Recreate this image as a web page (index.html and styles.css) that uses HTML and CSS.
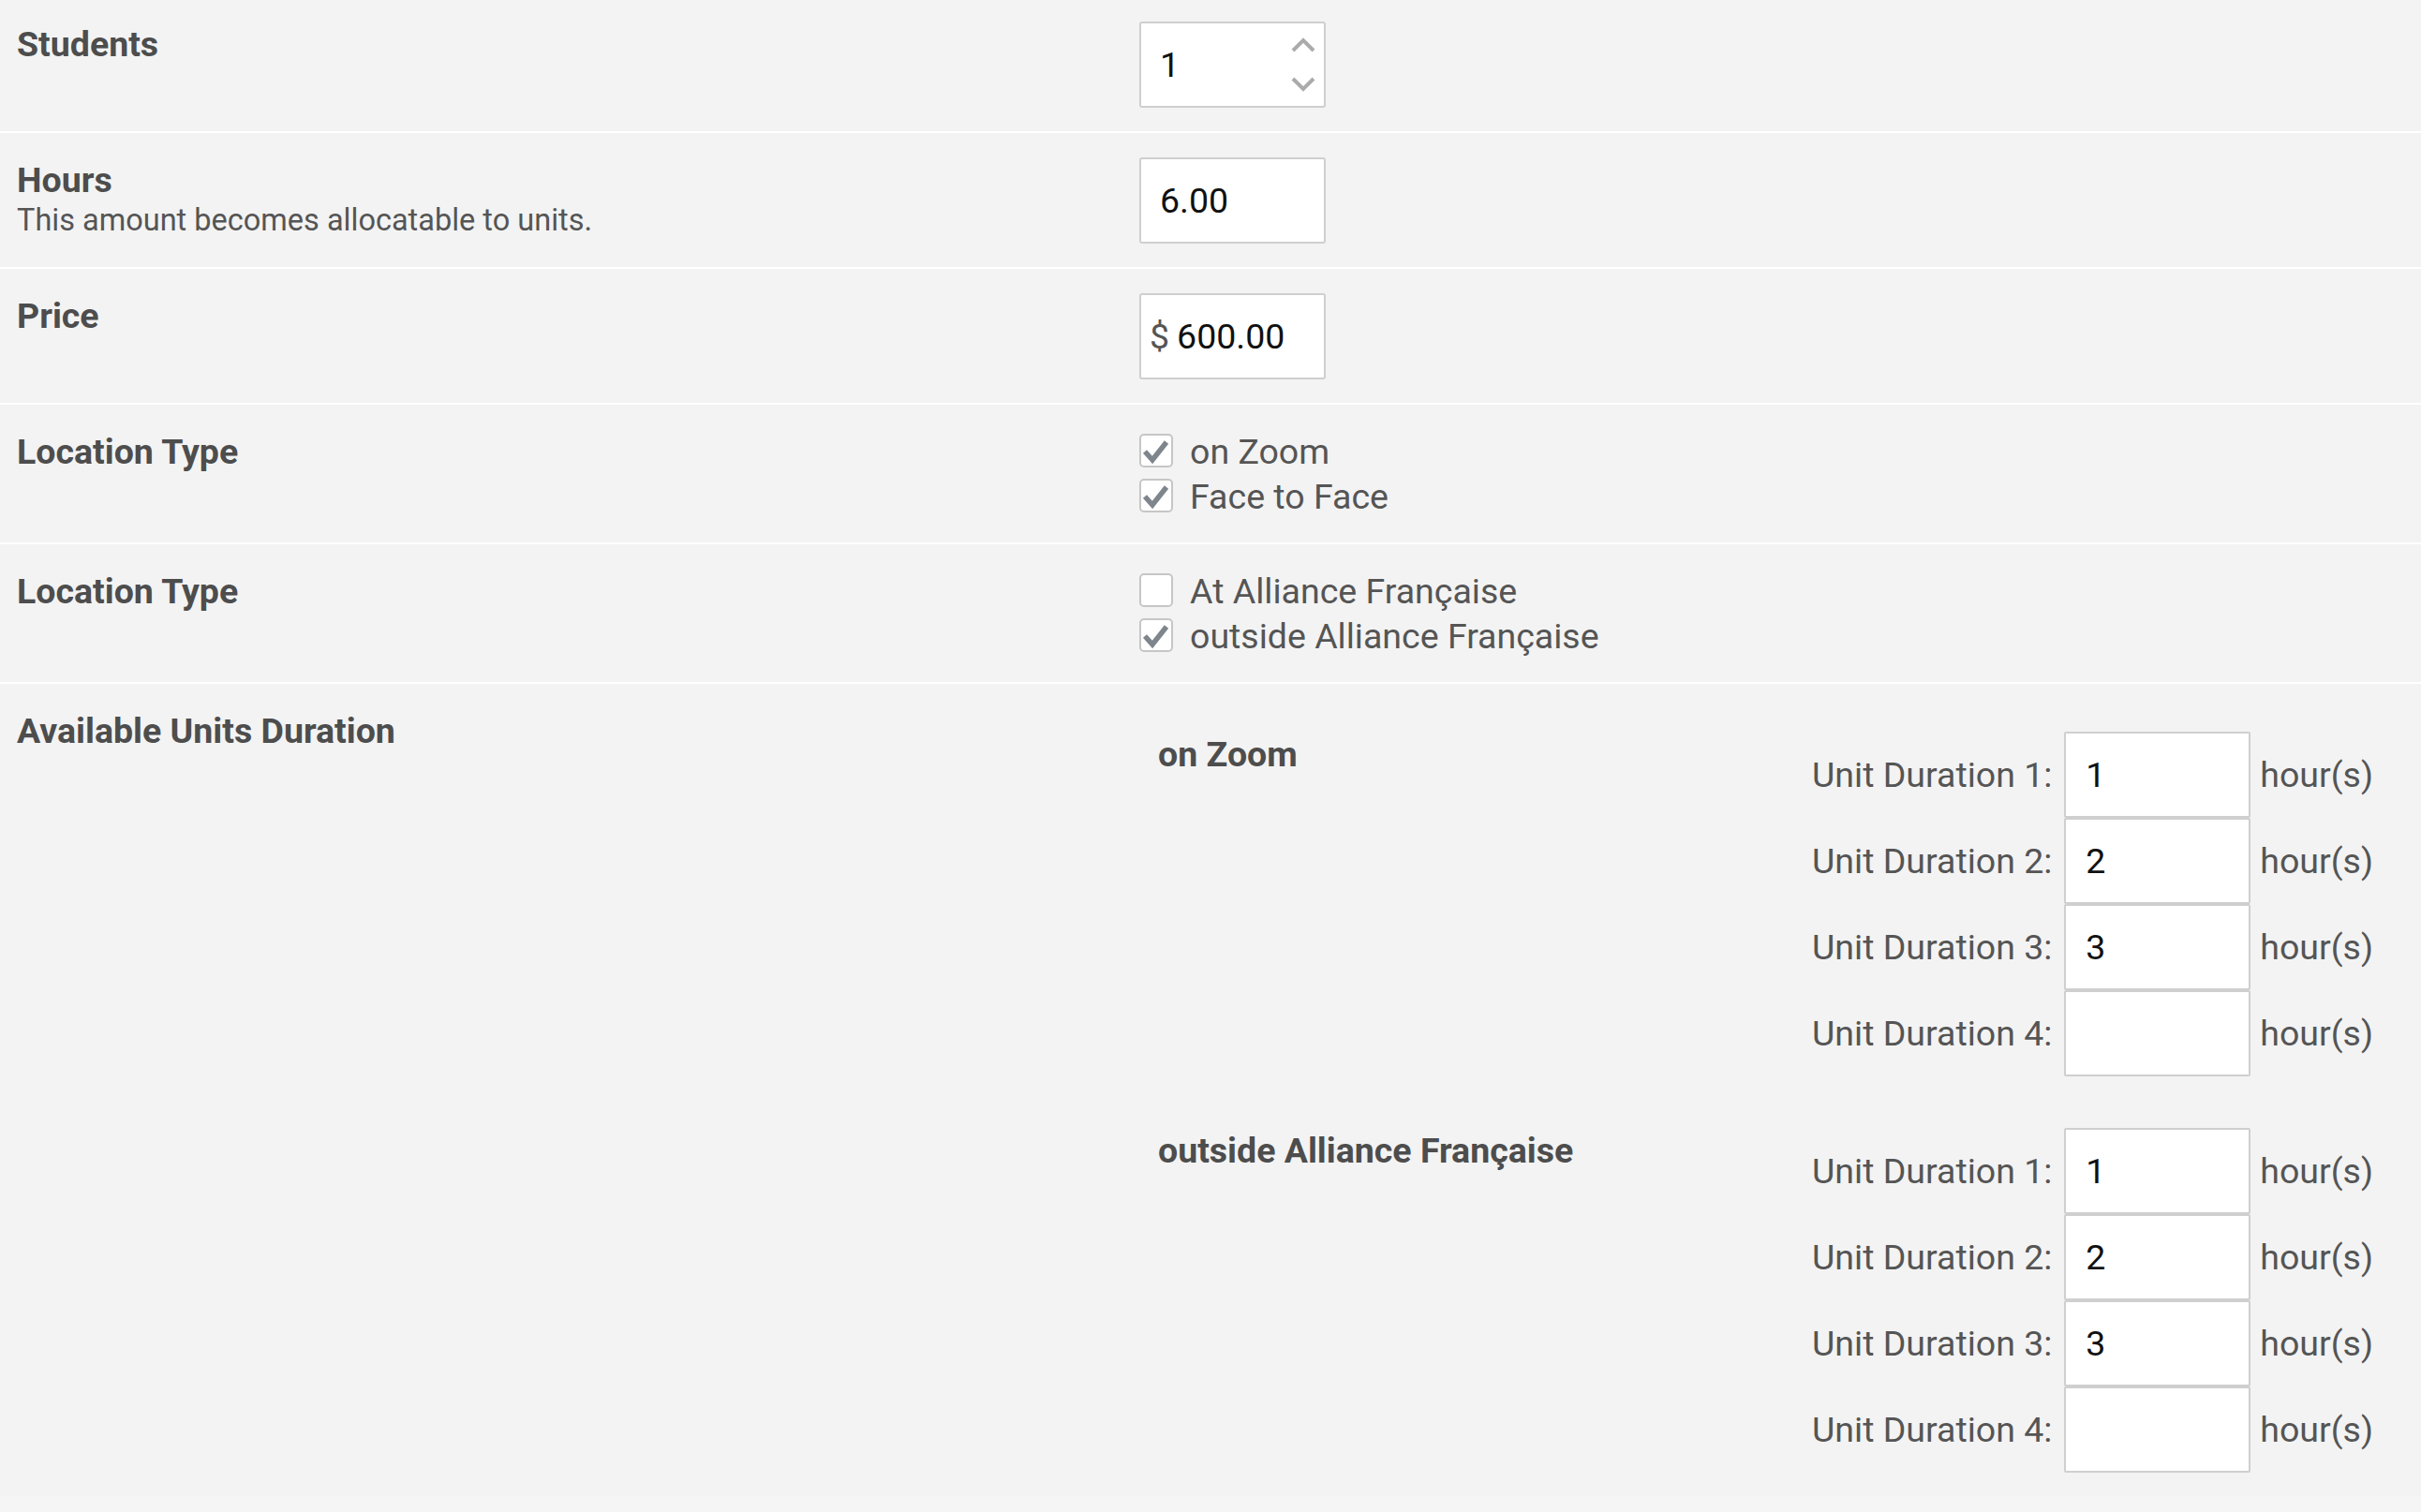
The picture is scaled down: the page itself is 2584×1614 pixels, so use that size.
FILE: index.html
```html
<!DOCTYPE html>
<html lang="en">
<head>
<meta charset="utf-8">
<title>Package settings</title>
<link rel="stylesheet" href="styles.css">
</head>
<body>
<div class="form">
  <div class="row">
    <div class="label-col"><div class="label">Students</div></div>
    <div class="field-col">
      <div class="box">
        <input class="box-input" type="text" value="1">
        <div class="spinner">
          <svg class="chev" viewBox="0 0 26 16" width="26" height="16"><polyline points="2,14 13,3 24,14"/></svg>
          <svg class="chev" viewBox="0 0 26 16" width="26" height="16"><polyline points="2,2 13,13 24,2"/></svg>
        </div>
      </div>
    </div>
  </div>
  <div class="row">
    <div class="label-col">
      <div class="label">Hours</div>
      <div class="desc">This amount becomes allocatable to units.</div>
    </div>
    <div class="field-col">
      <div class="box"><input class="box-input" type="text" value="6.00"></div>
    </div>
  </div>
  <div class="row">
    <div class="label-col"><div class="label">Price</div></div>
    <div class="field-col">
      <div class="box"><span class="currency">$</span><input class="box-input price-input" type="text" value="600.00"></div>
    </div>
  </div>
  <div class="row">
    <div class="label-col"><div class="label">Location Type</div></div>
    <div class="field-col">
      <div class="checks">
        <label class="check"><span class="cb"><svg viewBox="0 0 32 32" width="32" height="32"><polyline points="4,17 12,26 27,7"/></svg></span>on Zoom</label>
        <label class="check"><span class="cb"><svg viewBox="0 0 32 32" width="32" height="32"><polyline points="4,17 12,26 27,7"/></svg></span>Face to Face</label>
      </div>
    </div>
  </div>
  <div class="row">
    <div class="label-col"><div class="label">Location Type</div></div>
    <div class="field-col">
      <div class="checks">
        <label class="check"><span class="cb"></span>At Alliance Française</label>
        <label class="check"><span class="cb"><svg viewBox="0 0 32 32" width="32" height="32"><polyline points="4,17 12,26 27,7"/></svg></span>outside Alliance Française</label>
      </div>
    </div>
  </div>
  <div class="row">
    <div class="label-col"><div class="label">Available Units Duration</div></div>
    <div class="field-col groups">
      <div class="group">
        <div class="group-title">on Zoom</div>
        <div class="units">
          <div class="unit"><span class="unit-label">Unit Duration 1:</span><input class="unit-input" type="text" value="1"><span class="unit-suffix">hour(s)</span></div>
          <div class="unit"><span class="unit-label">Unit Duration 2:</span><input class="unit-input" type="text" value="2"><span class="unit-suffix">hour(s)</span></div>
          <div class="unit"><span class="unit-label">Unit Duration 3:</span><input class="unit-input" type="text" value="3"><span class="unit-suffix">hour(s)</span></div>
          <div class="unit"><span class="unit-label">Unit Duration 4:</span><input class="unit-input" type="text" value=""><span class="unit-suffix">hour(s)</span></div>
        </div>
      </div>
      <div class="group">
        <div class="group-title">outside Alliance Française</div>
        <div class="units">
          <div class="unit"><span class="unit-label">Unit Duration 1:</span><input class="unit-input" type="text" value="1"><span class="unit-suffix">hour(s)</span></div>
          <div class="unit"><span class="unit-label">Unit Duration 2:</span><input class="unit-input" type="text" value="2"><span class="unit-suffix">hour(s)</span></div>
          <div class="unit"><span class="unit-label">Unit Duration 3:</span><input class="unit-input" type="text" value="3"><span class="unit-suffix">hour(s)</span></div>
          <div class="unit"><span class="unit-label">Unit Duration 4:</span><input class="unit-input" type="text" value=""><span class="unit-suffix">hour(s)</span></div>
        </div>
      </div>
    </div>
  </div>
</div>
</body>
</html>
```

FILE: styles.css
```css
html, body {
  margin: 0;
  padding: 0;
  background: #f5f5f5;
}

body {
  font-family: Roboto, "Liberation Sans", Arial, sans-serif;
  color: #555555;
}

.row {
  display: grid;
  grid-template-columns: 1198px 1fr;
  padding: 26px 18px 25px;
  background: #f3f3f3;
  border-bottom: 2px solid #ffffff;
}

.row:first-child {
  padding-top: 23px;
}

.row:last-child {
  border-bottom: 0;
}

.label {
  font-weight: 700;
  font-size: 37.5px;
  line-height: 48px;
  color: #4d4d4d;
}

.desc {
  font-size: 32.5px;
  line-height: 38px;
  color: #555555;
}

.box {
  width: 199px;
  height: 92px;
  box-sizing: border-box;
  border: 2px solid #cfcfcf;
  border-radius: 3px;
  background: #ffffff;
  display: flex;
  align-items: center;
}

.box-input {
  border: 0;
  outline: 0;
  background: transparent;
  font-family: Roboto, "Liberation Sans", Arial, sans-serif;
  font-size: 37.5px;
  color: #111111;
  padding: 0 0 0 20px;
  margin: 0;
  flex: 1;
  min-width: 0;
  height: 100%;
  box-sizing: border-box;
}

.price-input {
  padding-left: 8px;
}

.currency {
  font-size: 37.5px;
  color: #555555;
  padding-left: 9px;
}

.spinner {
  display: flex;
  flex-direction: column;
  justify-content: space-between;
  height: 58px;
  margin-right: 9px;
}

.chev polyline {
  fill: none;
  stroke: #ababab;
  stroke-width: 4;
}

.checks {
  display: flex;
  flex-direction: column;
}

.check {
  display: flex;
  align-items: center;
  gap: 18px;
  height: 48px;
  font-size: 37.5px;
  color: #555555;
}

.cb {
  width: 36px;
  height: 36px;
  box-sizing: border-box;
  border: 2px solid #c6c6c6;
  border-radius: 5px;
  background: #ffffff;
  display: flex;
  align-items: center;
  justify-content: center;
  margin-top: -3px;
}

.cb svg polyline {
  fill: none;
  stroke: #7e858c;
  stroke-width: 5.5;
}

.groups {
  display: flex;
  flex-direction: column;
  gap: 55px;
  padding-top: 25px;
}

.group {
  display: flex;
  justify-content: space-between;
  padding: 0 33px 0 20px;
}

.group-title {
  font-weight: 700;
  font-size: 37.5px;
  line-height: 48px;
  color: #4d4d4d;
}

.units {
  display: flex;
  flex-direction: column;
}

.unit {
  display: flex;
  align-items: center;
  height: 92px;
  font-size: 37.5px;
  color: #555555;
}

.unit-label {
  margin-right: 13px;
}

.unit-input {
  width: 199px;
  height: 92px;
  box-sizing: border-box;
  border: 2px solid #cfcfcf;
  border-radius: 2px;
  background: #ffffff;
  outline: 0;
  margin: 0 10px 0 0;
  padding: 0 0 0 21px;
  font-family: Roboto, "Liberation Sans", Arial, sans-serif;
  font-size: 37.5px;
  color: #111111;
}
```
